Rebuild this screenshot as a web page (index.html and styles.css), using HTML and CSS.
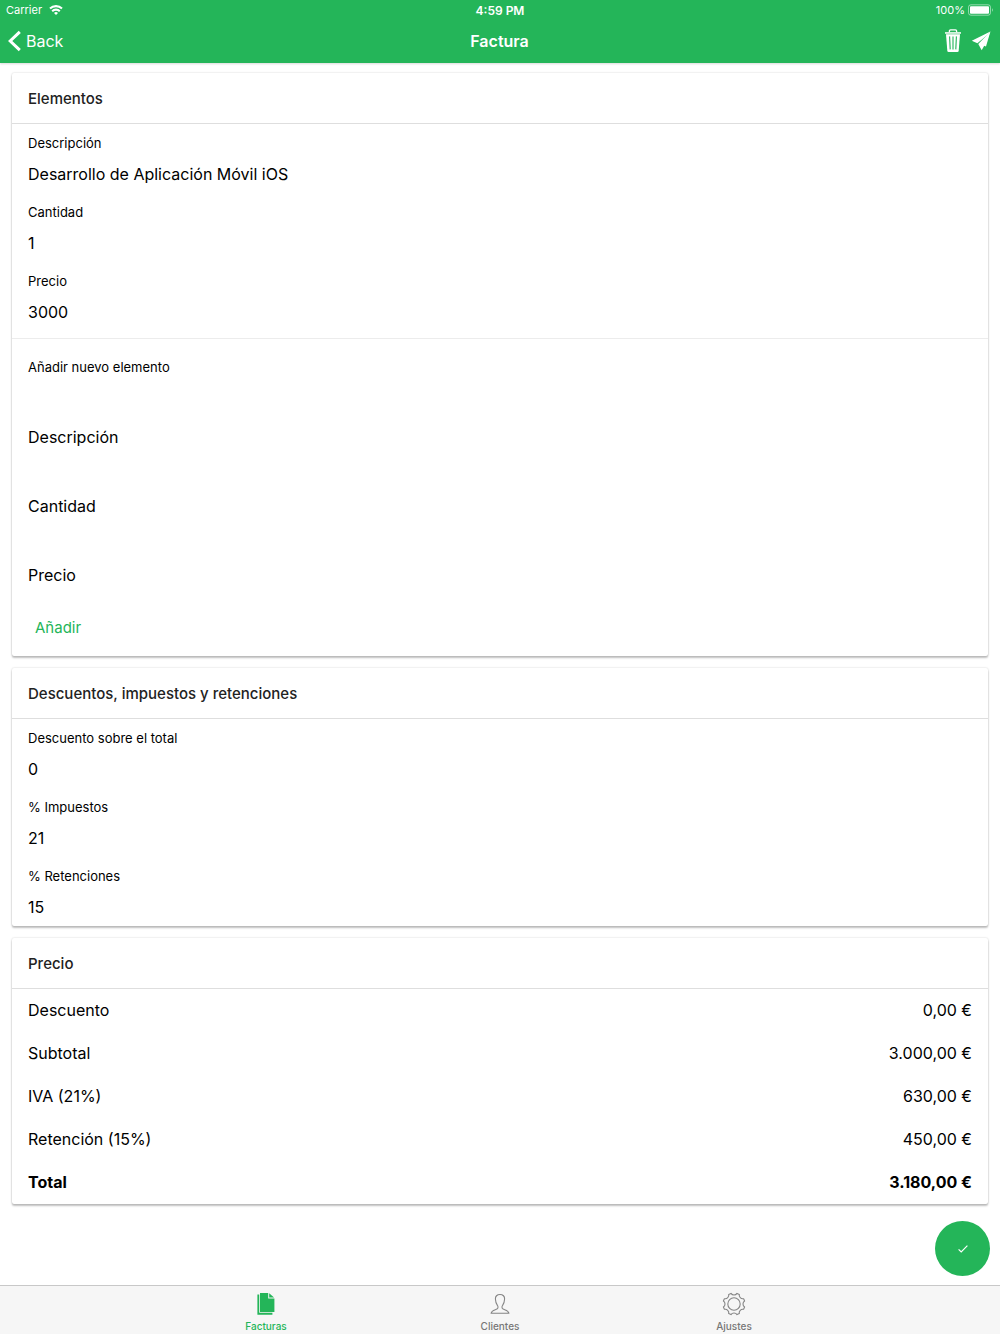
FILE: index.html
```html
<!DOCTYPE html>
<html lang="es">

<head>
    <meta charset="UTF-8">
    <meta name="viewport" content="width=device-width, initial-scale=1.0">
    <title>Factura</title>
    <link rel="stylesheet" href="styles.css">
</head>

<body>
    <header class="header">
        <div class="status-bar">
            <div class="status-left">
                <span>Carrier</span>
                <svg class="wifi" width="14" height="10" viewBox="0 0 14 10" fill="none" stroke="#fff" stroke-width="2.1">
                    <path d="M1 3.6a8.6 8.6 0 0 1 12 0M3.2 6.2a5.4 5.4 0 0 1 7.6 0" />
                    <path d="M7 9.9L5 8a2.8 2.8 0 0 1 4 0z" fill="#fff" stroke="none" />
                </svg>
            </div>
            <span class="status-time">4:59 PM</span>
            <div class="status-right">
                <span>100%</span>
                <svg width="26" height="12" viewBox="0 0 26 12">
                    <rect x="0.5" y="0.8" width="22" height="10.4" rx="2.4" fill="none" stroke="#fff" stroke-opacity="0.5" />
                    <rect x="2" y="2.3" width="19" height="7.4" rx="1" fill="#fff" />
                    <path d="M24 4.3a2 2 0 0 1 0 3.4z" fill="#fff" fill-opacity="0.5" />
                </svg>
            </div>
        </div>
        <nav class="nav-bar">
            <a href="#" class="back">
                <svg width="14" height="22" viewBox="0 0 14 22" fill="none" stroke="#fff" stroke-width="3">
                    <path d="M11.8 1.8L2.2 11l9.600 9.200" />
                </svg>
                <span>Back</span>
            </a>
            <h1 class="title">Factura</h1>
            <div class="actions">
                <button type="button" class="icon-btn" aria-label="Eliminar">
                    <svg width="18" height="24" viewBox="0 0 18 24">
                        <path d="M5.4 3.2V2Q5.4.9 6.5.9h5Q12.6.9 12.6 2v1.2" fill="none" stroke="#fff" stroke-width="1.3" />
                        <path d="M1 3.2h16v1.5H1z" fill="#fff" />
                        <path d="M2 5.2h14l-1.3 16.6q-.1 1.2-1.3 1.2H4.6q-1.2 0-1.3-1.2z" fill="#fff" />
                        <path d="M5.6 7.4l.6 13M9 7.4v13M12.4 7.4l-.6 13" stroke="#24b559" stroke-width="1.1" />
                    </svg>
                </button>
                <button type="button" class="icon-btn" aria-label="Enviar">
                    <svg width="20" height="20" viewBox="0 0 20 20" fill="#fff">
                        <path d="M19.4.6L.8 9.8l5.6 2.5L16.600 3.800z" />
                        <path d="M19.4.6L7.300 12.900l3.400 6.300 2.200-4z" />
                        <path d="M19.4.6L9.200 13.200l5.800 2.200z" />
                    </svg>
                </button>
            </div>
        </nav>
    </header>

    <main class="content">
        <section class="card">
            <h2 class="card-title">Elementos</h2>
            <div class="item">
                <div class="field">
                    <label for="desc">Descripción</label>
                    <input type="text" id="desc" value="Desarrollo de Aplicación Móvil iOS">
                </div>
                <div class="field">
                    <label for="cant">Cantidad</label>
                    <input type="text" id="cant" value="1">
                </div>
                <div class="field">
                    <label for="precio">Precio</label>
                    <input type="text" id="precio" value="3000">
                </div>
            </div>
            <form class="new-item">
                <h3 class="new-title">Añadir nuevo elemento</h3>
                <div class="new-field">
                    <label for="new-desc">Descripción</label>
                    <input type="text" id="new-desc">
                </div>
                <div class="new-field">
                    <label for="new-cant">Cantidad</label>
                    <input type="text" id="new-cant">
                </div>
                <div class="new-field">
                    <label for="new-precio">Precio</label>
                    <input type="text" id="new-precio">
                </div>
                <button type="button" class="add-btn">Añadir</button>
            </form>
        </section>

        <section class="card">
            <h2 class="card-title">Descuentos, impuestos y retenciones</h2>
            <div class="field">
                <label for="descuento">Descuento sobre el total</label>
                <input type="text" id="descuento" value="0">
            </div>
            <div class="field">
                <label for="impuestos">% Impuestos</label>
                <input type="text" id="impuestos" value="21">
            </div>
            <div class="field">
                <label for="retenciones">% Retenciones</label>
                <input type="text" id="retenciones" value="15">
            </div>
        </section>

        <section class="card">
            <h2 class="card-title">Precio</h2>
            <table class="totals">
                <tbody>
                    <tr>
                        <th scope="row">Descuento</th>
                        <td>0,00 €</td>
                    </tr>
                    <tr>
                        <th scope="row">Subtotal</th>
                        <td>3.000,00 €</td>
                    </tr>
                    <tr>
                        <th scope="row">IVA (21%)</th>
                        <td>630,00 €</td>
                    </tr>
                    <tr>
                        <th scope="row">Retención (15%)</th>
                        <td>450,00 €</td>
                    </tr>
                    <tr class="total">
                        <th scope="row">Total</th>
                        <td>3.180,00 €</td>
                    </tr>
                </tbody>
            </table>
        </section>
    </main>

    <button type="button" class="fab" aria-label="Guardar">
        <svg width="10" height="8" viewBox="0 0 10 8" fill="none" stroke="#fff" stroke-width="1.2">
            <path d="M.6 4.4l2.6 2.5L9.4.7" />
        </svg>
    </button>

    <nav class="tab-bar">
        <a href="#" class="tab active">
            <svg width="24" height="24" viewBox="0 0 24 24" fill="#24b559">
                <path d="M3.4 2.6h1.8v18.2h13.2v1.9H3.4z" />
                <path d="M6 .9h8.2v5.6h6.2V20H6z" />
                <path d="M15.2 1.2l4.9 4.4h-4.9z" />
            </svg>
            <span>Facturas</span>
        </a>
        <a href="#" class="tab">
            <svg width="24" height="24" viewBox="0 0 24 24" fill="none" stroke="#858585" stroke-width="1.1">
                <path d="M12 2.5c-3 0-4.7 1.8-4.6 4.5.1 2.5.7 4.6 2 6.3.9 1.3.8 3.2-.5 3.8-2.2 1-5.3 1.3-5.7 4.1h17.6c-.4-2.8-3.5-3.1-5.7-4.1-1.3-.6-1.4-2.5-.5-3.8 1.3-1.7 1.900-3.8 2-6.3.1-2.7-1.6-4.5-4.6-4.5z" />
            </svg>
            <span>Clientes</span>
        </a>
        <a href="#" class="tab">
            <svg width="24" height="24" viewBox="0 0 24 24" fill="none" stroke="#858585" stroke-width="1.1" stroke-linejoin="round">
                <path d="M22.6 15L21.6 17.3A3.6 3.6 0 0 0 17.3 21.6L15 22.6A3.6 3.6 0 0 0 9 22.6L6.7 21.6A3.6 3.6 0 0 0 2.4 17.3L1.4 15A3.6 3.6 0 0 0 1.4 9L2.4 6.7A3.6 3.6 0 0 0 6.7 2.4L9 1.4A3.6 3.6 0 0 0 15 1.4L17.3 2.4A3.6 3.6 0 0 0 21.6 6.7L22.6 9A3.6 3.6 0 0 0 22.6 15z" />
                <circle cx="12" cy="12" r="6.2" />
            </svg>
            <span>Ajustes</span>
        </a>
    </nav>
</body>

</html>
```
FILE: styles.css
```css
* {
    box-sizing: border-box;
}

body {
    display: flex;
    flex-direction: column;
    min-height: 100vh;
    margin: 0;
    background-color: #fff;
    color: #000;
    font-family: Inter, "Liberation Sans", sans-serif;
    font-size: 16px;
}

h1,
h2,
h3 {
    margin: 0;
}

a {
    text-decoration: none;
}

svg {
    display: block;
}

button,
input {
    padding: 0;
    border: none;
    background: none;
    color: inherit;
    font: inherit;
}

/* header */
.header {
    background-color: #24b559;
    color: #fff;
    box-shadow: 0 1px 2px rgba(0, 0, 0, 0.15);
}

.status-bar,
.nav-bar {
    display: grid;
    grid-template-columns: 1fr auto 1fr;
    align-items: center;
}

.status-bar {
    height: 20px;
    padding: 0 6px;
    font-size: 11px;
}

.status-left,
.status-right {
    display: flex;
    align-items: center;
    gap: 7px;
}

.status-right {
    justify-content: flex-end;
    gap: 3px;
}

.status-time {
    font-size: 12px;
    font-weight: 600;
}

.nav-bar {
    height: 43px;
    padding: 0 9px 2px 8px;
}

.back {
    display: flex;
    align-items: center;
    gap: 4px;
    color: #fff;
}

.title {
    font-size: 16px;
    font-weight: 600;
}

.actions {
    display: flex;
    justify-content: flex-end;
    align-items: center;
    gap: 9px;
}

/* cards */
.content {
    display: flex;
    flex-direction: column;
    flex: 1;
    gap: 12px;
    padding: 10px 12px 81px;
}

.card {
    border-radius: 2px;
    box-shadow: 0 2px 2px rgba(0, 0, 0, 0.24), 0 0 2px rgba(0, 0, 0, 0.2);
}

.card-title {
    padding: 16px 16px 14px;
    border-bottom: 1px solid #dedede;
    color: #222;
    font-size: 15px;
    font-weight: 500;
    line-height: 20px;
}

.item {
    padding-bottom: 7px;
    border-bottom: 1px solid #ececec;
}

.field {
    display: flex;
    flex-direction: column;
    gap: 7px;
    padding: 10px 16px 4px;
}

.field label,
.new-title {
    font-size: 13px;
    font-weight: 400;
    line-height: 18px;
}

.field input {
    height: 30px;
}

.new-item {
    padding: 0 16px 11px;
}

.new-title {
    padding: 19px 0 26px;
}

.new-field {
    display: flex;
    align-items: center;
    gap: 8px;
    height: 69px;
}

.new-field input {
    flex: 1;
    height: 30px;
}

.add-btn {
    height: 36px;
    padding: 0 7px;
    color: #24b559;
    font-size: 15px;
}

/* totals */
.totals {
    width: 100%;
    border-collapse: collapse;
}

.totals th,
.totals td {
    height: 43px;
    padding: 0 16px 2px;
    font-weight: 400;
    text-align: left;
}

.totals td {
    text-align: right;
}

.totals .total th,
.totals .total td {
    font-weight: 700;
}

.fab {
    position: fixed;
    right: 10px;
    bottom: 58px;
    display: flex;
    justify-content: center;
    align-items: center;
    width: 55px;
    height: 55px;
    border-radius: 50%;
    background-color: #24b559;
}

/* tab bar */
.tab-bar {
    position: sticky;
    bottom: 0;
    display: flex;
    justify-content: center;
    border-top: 1px solid #c8c8c8;
    background-color: #f6f6f6;
}

.tab {
    display: flex;
    flex-direction: column;
    flex: 1;
    align-items: center;
    gap: 4px;
    max-width: 234px;
    padding: 6px 0 3px;
    color: #777;
    font-size: 10px;
    font-weight: 500;
    line-height: 12px;
}

.tab.active {
    color: #24b559;
}
```
